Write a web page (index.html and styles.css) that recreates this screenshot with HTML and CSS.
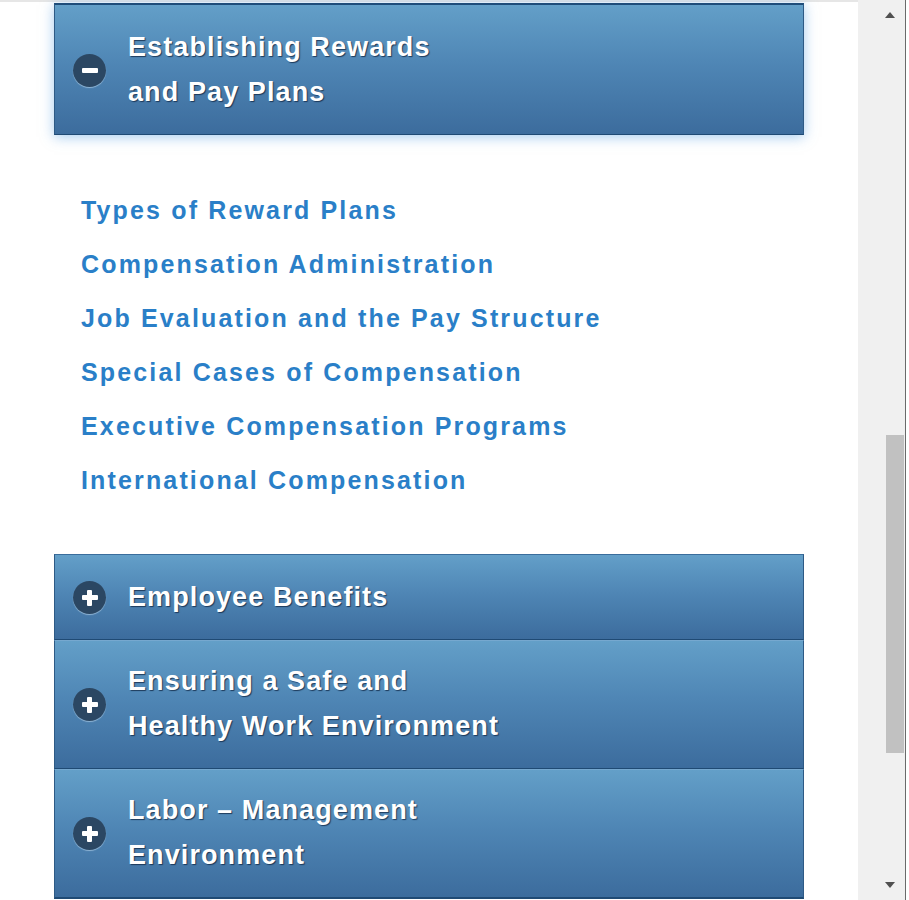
FILE: index.html
```html
<!DOCTYPE html>
<html lang="en">
<head>
  <meta charset="UTF-8">
  <meta name="viewport" content="width=device-width, initial-scale=1.0">
  <title>Compensation and Benefits</title>
  <link rel="stylesheet" href="styles.css">
</head>
<body>
  <div class="page">
    <main class="content">
      <section class="accordion">
        <div class="panel panel-open">
          <span class="panel-icon icon-minus"></span>
          <h2 class="panel-title">Establishing Rewards<br>and Pay Plans</h2>
        </div>

        <ul class="topic-list">
          <li><a href="#">Types of Reward Plans</a></li>
          <li><a href="#">Compensation Administration</a></li>
          <li><a href="#">Job Evaluation and the Pay Structure</a></li>
          <li><a href="#">Special Cases of Compensation</a></li>
          <li><a href="#">Executive Compensation Programs</a></li>
          <li><a href="#">International Compensation</a></li>
        </ul>

        <div class="panel-group">
          <div class="panel">
            <span class="panel-icon icon-plus"></span>
            <h2 class="panel-title">Employee Benefits</h2>
          </div>
          <div class="panel">
            <span class="panel-icon icon-plus"></span>
            <h2 class="panel-title">Ensuring a Safe and<br>Healthy Work Environment</h2>
          </div>
          <div class="panel">
            <span class="panel-icon icon-plus"></span>
            <h2 class="panel-title">Labor – Management<br>Environment</h2>
          </div>
        </div>
      </section>
    </main>

    <div class="scrollbar">
      <div class="scroll-arrow">
        <svg width="10" height="6" viewBox="0 0 10 6"><path d="M0 6 L5 0 L10 6 Z" fill="#505050"/></svg>
      </div>
      <div class="scroll-track">
        <div class="scroll-thumb"></div>
      </div>
      <div class="scroll-arrow">
        <svg width="10" height="6" viewBox="0 0 10 6"><path d="M0 0 L10 0 L5 6 Z" fill="#505050"/></svg>
      </div>
    </div>
  </div>
</body>
</html>
```

FILE: styles.css
```css
/* Course outline accordion */
html, body {
  margin: 0;
  padding: 0;
  height: 900px;
  overflow: hidden;
  background: #fff;
}

body {
  font-family: "Liberation Sans", Arial, sans-serif;
}

.page {
  display: flex;
  height: 900px;
}

.content {
  width: 858px;
  border-top: 2px solid #e6e6e6;
  padding-top: 1px;
}

.accordion {
  width: 750px;
  margin-left: 54px;
}

.panel {
  display: flex;
  align-items: center;
  padding: 20px 0 19px 18px;
  background: linear-gradient(to bottom, #639fc8 0%, #4f86b5 45%, #3c6c9d 100%);
  border: 1px solid #2e5a85;
  border-top-color: #3a6d9c;
  border-bottom-color: #1f4a74;
}

.panel-open {
  border-top: 2px solid #1f4d7a;
  box-shadow: 0 2px 12px rgba(90, 160, 225, 0.55);
}

.panel-group .panel + .panel {
  border-top: 1px solid #76a8cf;
  padding-top: 18px;
}

.panel-group .panel:last-child {
  border-bottom: 2px solid #1f4a74;
}

.panel-title {
  margin: 0 0 0 22px;
  font-size: 27px;
  line-height: 45px;
  font-weight: 700;
  letter-spacing: 1.1px;
  color: #fff;
  text-shadow: 1px 1px 1px rgba(20, 45, 75, 0.85);
}

.panel-icon {
  position: relative;
  flex: none;
  width: 33px;
  height: 33px;
  border-radius: 50%;
  background: #2b4763;
  box-shadow: 0 1px 1px rgba(200, 225, 245, 0.55);
}

.panel-icon::before,
.panel-icon::after {
  content: '';
  position: absolute;
  background: #fff;
  border-radius: 1px;
}

.panel-icon::before {
  left: 9px;
  top: 14px;
  width: 16px;
  height: 5px;
}

.icon-plus::after {
  left: 14px;
  top: 9px;
  width: 5px;
  height: 16px;
}

.topic-list {
  list-style: none;
  margin: 0;
  padding: 48px 0 47px 27px;
}

.topic-list li {
  font-size: 25px;
  line-height: 54px;
}

.topic-list a {
  font-weight: 700;
  letter-spacing: 2.15px;
  color: #2a7fc8;
  text-decoration: none;
}

/* fake window scrollbar */
.scrollbar {
  display: flex;
  flex-direction: column;
  width: 47px;
  background: #f0f0f0;
  border-right: 1px solid #6a6a6a;
}

.scroll-arrow {
  display: flex;
  justify-content: flex-end;
  align-items: center;
  height: 30px;
  padding-right: 10px;
}

.scroll-track {
  flex: 1;
  padding: 405px 1px 0 28px;
}

.scroll-thumb {
  height: 318px;
  background: #c1c1c1;
}
```
